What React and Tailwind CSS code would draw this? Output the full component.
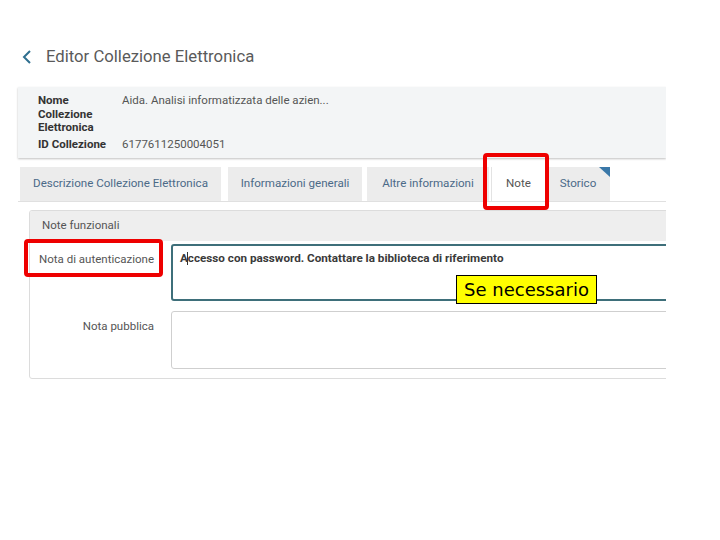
import React from 'react';

const tabs = [
  { label: 'Descrizione Collezione Elettronica', w: 'w-[201px]', ml: 'ml-0' },
  { label: 'Informazioni generali', w: 'w-[134px]', ml: 'ml-[7px]' },
  { label: 'Altre informazioni', w: 'w-[122px]', ml: 'ml-[5px]' },
  { label: 'Note', w: 'w-[54px]', ml: 'ml-[2px]', active: true },
  { label: 'Storico', w: 'w-[64px]', ml: 'ml-px', corner: true },
];

export default function App() {
  return (
    <div className="relative w-[720px] h-[540px] bg-white overflow-hidden font-['Roboto','Liberation_Sans',sans-serif]">
      <div className="w-[666px] overflow-hidden">
        {/* title */}
        <div className="flex items-center h-[20px] mt-[47px] pl-[22px]">
          <svg width="10" height="16" viewBox="0 0 10 16" className="text-[#2f6f8f]">
            <path d="M8 2 L2 8 L8 14" fill="none" stroke="currentColor" strokeWidth="2" />
          </svg>
          <span className="ml-[14px] text-[16.7px] text-[#5a5a5a]">Editor Collezione Elettronica</span>
        </div>

        {/* info panel */}
        <div className="ml-[18px] mt-[20px] h-[71px] bg-[#f3f5f6] shadow-[0_1px_2px_rgba(0,0,0,0.25)] pl-[20px] pt-[7px] text-[11.5px] leading-[13.5px]">
          <div className="flex">
            <div className="w-[84px] shrink-0 font-bold text-[#333]">Nome<br />Collezione<br />Elettronica</div>
            <div className="text-[#555]">Aida. Analisi informatizzata delle azien...</div>
          </div>
          <div className="flex mt-[3px]">
            <div className="w-[84px] shrink-0 font-bold text-[#333]">ID Collezione</div>
            <div className="text-[#555]">6177611250004051</div>
          </div>
        </div>

        {/* tabs */}
        <div className="ml-[18px] mt-[9px] border-b border-[#e0e0e0] flex pl-[2px]">
          {tabs.map((t) => (
            <div
              key={t.label}
              className={`relative shrink-0 ${t.w} ${t.ml} h-[34px] flex items-center justify-center text-[11.6px] ${
                t.active ? 'bg-white border-l border-[#e3e3e3] text-[#555]' : 'bg-[#ececec] text-[#4b6a88]'
              }`}
            >
              {t.label}
              {t.corner && (
                <svg width="11" height="10" viewBox="0 0 11 10" className="absolute top-0 right-0">
                  <path d="M0 0 L11 0 L11 10 Z" fill="#3a78a8" />
                </svg>
              )}
            </div>
          ))}
        </div>

        {/* section */}
        <div className="ml-[29px] mt-[8px] w-[660px] h-[169px] border border-[#dcdcdc] rounded-[3px] overflow-hidden">
          <div className="h-[30px] bg-[#eeeeee] flex items-center pl-[12px] text-[11.5px] text-[#555]">Note funzionali</div>
          <div className="flex mt-[3px]">
            <div className="w-[124px] shrink-0 text-right text-[11.5px] text-[#555] pt-[7px]">Nota di autenticazione</div>
            <div className="ml-[17px] w-[540px] shrink-0 h-[57px] border-2 border-[#3e6f7a] rounded-[3px] pl-[7px] pt-[4px] text-[11.7px] font-bold text-[#3a3a3a] whitespace-nowrap">
              A<span className="inline-block w-px h-[13px] bg-[#333] align-middle -mx-[0.5px]" />ccesso con password. Contattare la biblioteca di riferimento
            </div>
          </div>
          <div className="flex mt-[10px]">
            <div className="w-[124px] shrink-0 text-right text-[11.5px] text-[#555] pt-[7px]">Nota pubblica</div>
            <div className="ml-[17px] w-[540px] shrink-0 h-[58px] border border-[#cfcfcf] rounded-[3px]" />
          </div>
        </div>
      </div>

      {/* annotations */}
      <div className="absolute left-[24px] top-[239px] w-[139px] h-[38px] border-4 border-[#ee0000] rounded-[4px]" />
      <div className="absolute left-[483px] top-[153px] w-[66px] h-[57px] border-4 border-[#ee0000] rounded-[4px]" />
      <div className="absolute left-[456px] top-[275px] w-[141px] h-[29px] bg-[#ffff00] border border-black flex items-center justify-center text-[18px] text-black font-['DejaVu_Sans',sans-serif]">
        Se necessario
      </div>
    </div>
  );
}
